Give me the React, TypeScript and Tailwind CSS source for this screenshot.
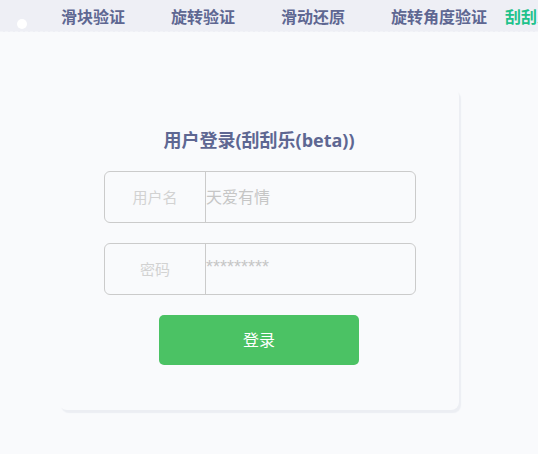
const navItems = ["滑块验证", "旋转验证", "滑动还原", "旋转角度验证"];

const Field = ({ label, value, mono }: { label: string; value: string; mono?: boolean }) => {
  return (
    <div className="flex h-[52px] w-[312px] rounded-md border border-[#cbcbcb]">
      <div className="flex w-[101px] items-center justify-center border-r border-[#cbcbcb] text-[15px] text-[#d2d2d2]">
        {label}
      </div>
      <div
        className={
          mono
            ? "flex flex-1 items-center pb-[4px] font-['Liberation_Sans'] text-[18px] text-[#c6c6c6]"
            : "flex flex-1 items-center text-[16px] text-[#c6c6c6]"
        }
      >
        {value}
      </div>
    </div>
  );
};

export default function App() {
  return (
    <div
      className="h-[454px] w-[538px] overflow-hidden bg-[#f9fafc]"
      style={{ fontFamily: '"Open Sans", "Noto Sans CJK SC", sans-serif' }}
    >
      <div className="relative flex h-[32px] items-center overflow-hidden whitespace-nowrap border-b border-dashed border-[#f3f4f8] bg-[#eeeff5] pl-[61px] pt-[2px] text-[16px] font-bold text-[#5e6792]">
        <div className="absolute left-[17px] top-[19px] h-[10px] w-[10px] rounded-full bg-white"></div>
        <div className="flex gap-[46px]">
          {navItems.map((t) => (
            <span key={t}>{t}</span>
          ))}
        </div>
        <span className="ml-[18px] text-[#1ec28b]">刮刮乐</span>
      </div>

      <div className="ml-[59px] mt-[56px] flex w-[400px] flex-col items-center rounded-lg bg-[#f9fafc] pb-[45px] pt-[38px] shadow-[2px_3px_1px_#eceef3]">
        <h1 className="text-[18px] font-bold leading-[28px] text-[#5e6792]">用户登录(刮刮乐(beta))</h1>
        <div className="ml-[2px] mt-[17px] flex flex-col gap-[20px]">
          <Field label="用户名" value="天爱有情" />
          <Field label="密码" value="*********" mono />
        </div>
        <button className="mt-[20px] h-[50px] w-[200px] rounded-[5px] bg-[#4bc264] text-[16px] text-white">
          登录
        </button>
      </div>
    </div>
  );
}
